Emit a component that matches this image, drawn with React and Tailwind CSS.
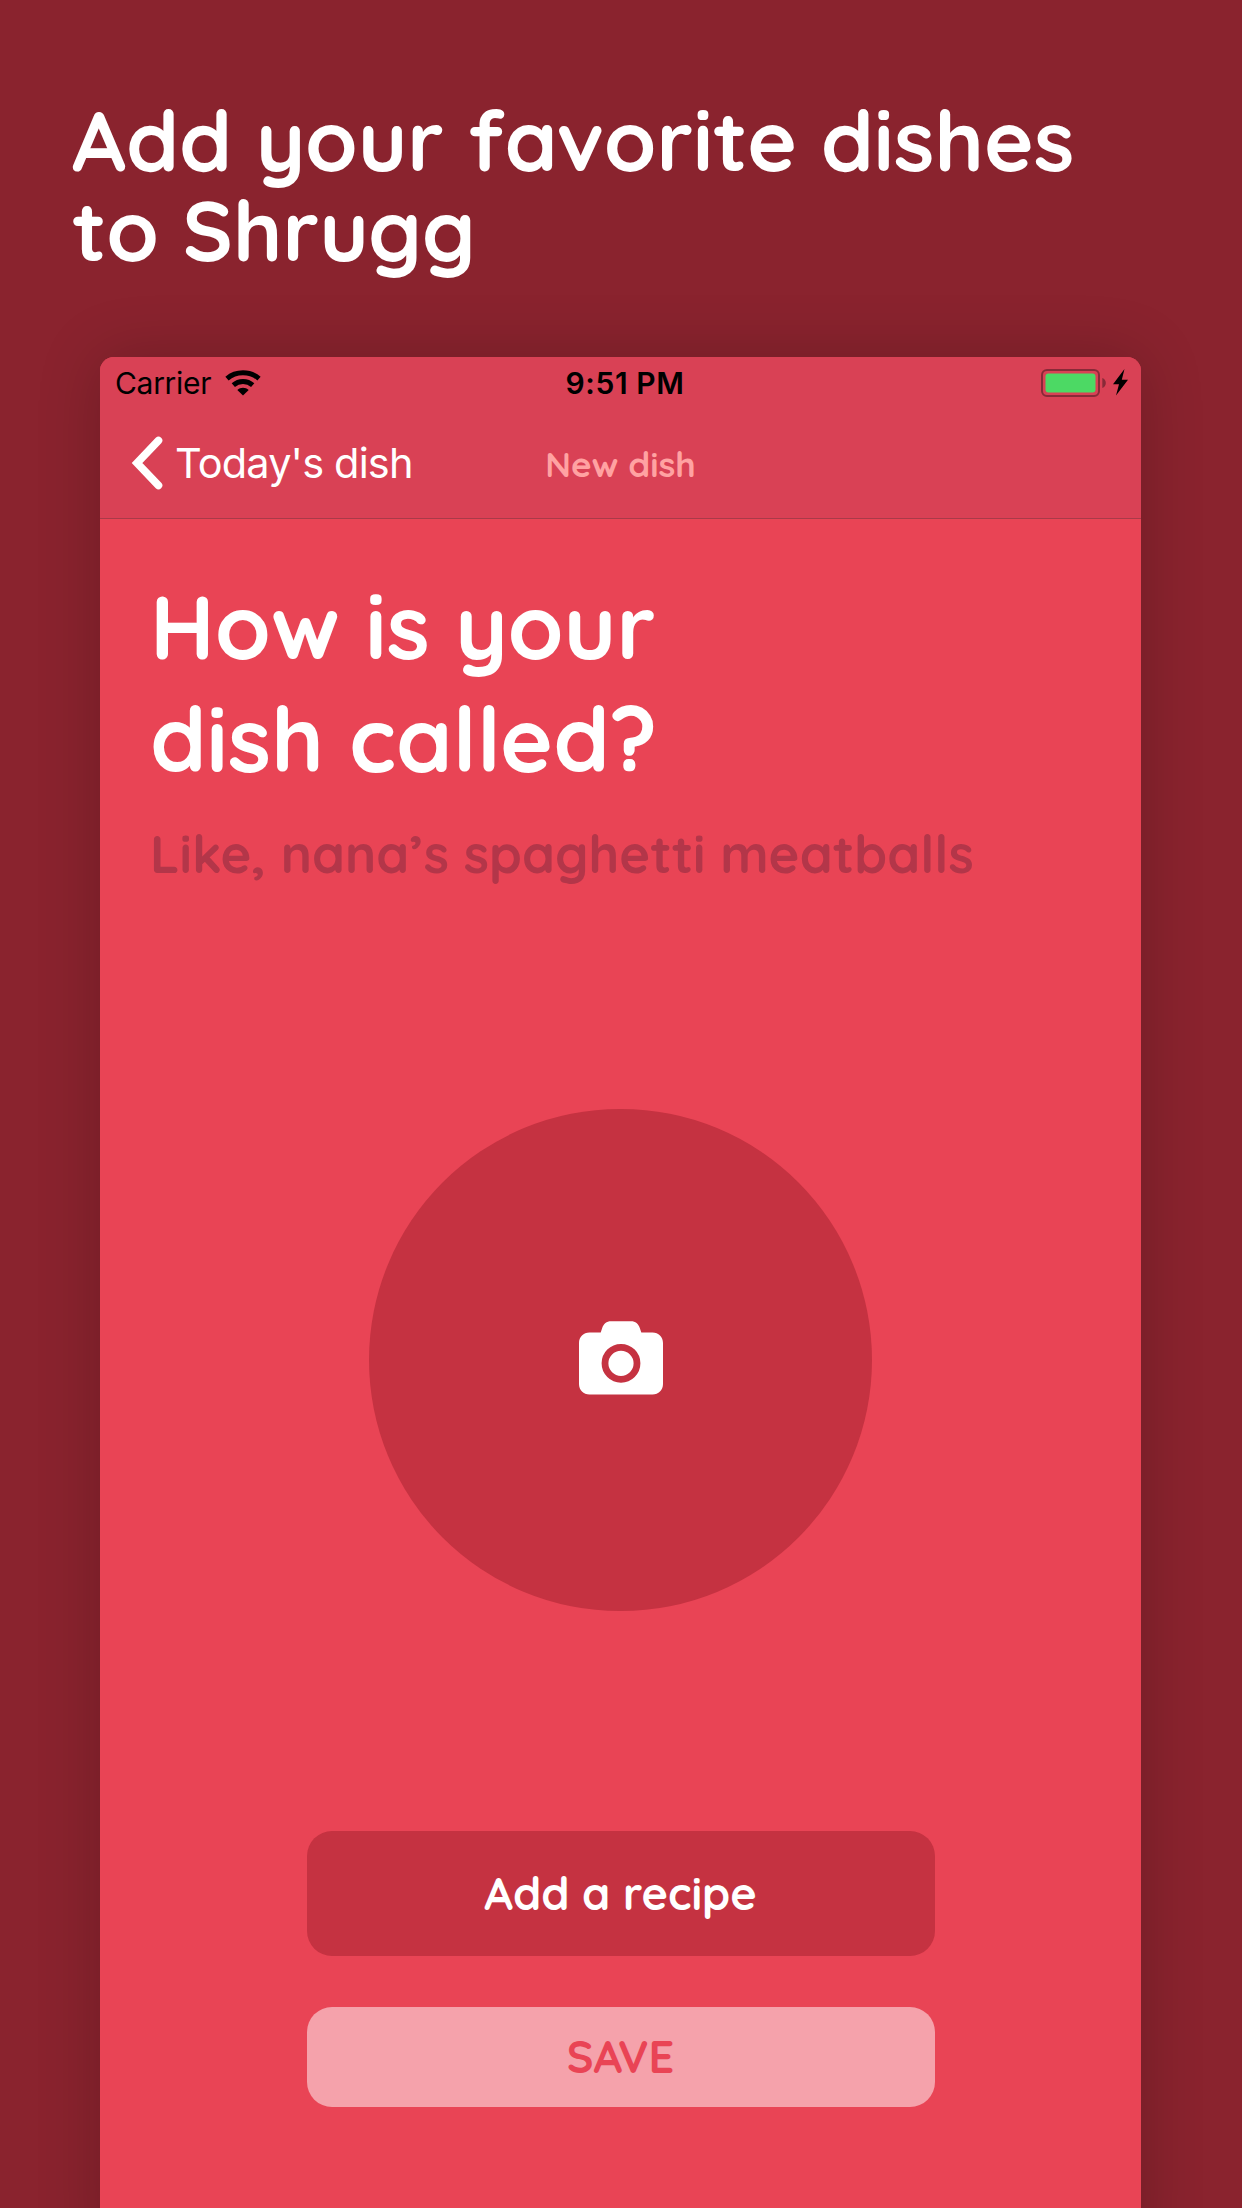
function WifiIcon() {
	return (
		<svg className="w-9 h-[26px]" viewBox="0 0 36 26" fill="none" stroke="#000">
			<path d="M2 8.6C11 0.9 25 0.9 34 8.6" strokeWidth="5" />
			<path d="M8.3 15.2C13.8 10.3 22.2 10.3 27.7 15.2" strokeWidth="4.9" />
			<path d="M12.3 20C15.6 17 20.4 17 23.7 20L18 25.6Z" fill="#000" stroke="none" />
		</svg>
	)
}

function BatteryIcon() {
	return (
		<svg className="w-[66px] h-7" viewBox="0 0 66 28">
			<rect x="1" y="1" width="57" height="26" rx="5" fill="none" stroke="#882a38" strokeWidth="2" />
			<rect x="4.5" y="4.5" width="50" height="19" rx="3" fill="#4cd964" />
			<path d="M61.3 9C66 10.5 66 17.5 61.3 19Z" fill="#882a38" />
		</svg>
	)
}

function BoltIcon() {
	return (
		<svg className="w-[15px] h-[27px]" viewBox="0 0 15 27">
			<path d="M11.5 0L0 15.3H6L3 26.5L15 10.8H8.8Z" fill="#000" />
		</svg>
	)
}

function ChevronIcon() {
	return (
		<svg className="w-8 h-[54px]" viewBox="0 0 32 54" fill="none" stroke="#fff" strokeWidth="7.6" strokeLinecap="round">
			<path d="M27.5 4.5L6 27L27.5 49.5" strokeLinejoin="miter" />
		</svg>
	)
}

function CameraIcon() {
	return (
		<svg className="w-[84px] h-[74px]" viewBox="0 0 84 74">
			<path
				d="M10.5 11.5H21.7L23.2 7C24.6 2.8 27.5 0.2 32 0.2H52C56.5 0.2 59.4 2.8 60.8 7L62.3 11.5H73.5C79.5 11.5 84 16 84 22V63C84 69 79.5 73.5 73.5 73.5H10.5C4.5 73.5 0 69 0 63V22C0 16 4.5 11.5 10.5 11.5Z"
				fill="#fff"
			/>
			<circle cx="42" cy="42.3" r="16" fill="none" stroke="#c53241" strokeWidth="6.8" />
		</svg>
	)
}

export default function App() {
	return (
		<div className="h-[2208px] w-[1242px] overflow-hidden bg-[#8a232e] font-['Quicksand','Nunito','Lato',sans-serif] font-bold text-white">
			<div className="flex h-[357px] flex-col pt-[94px] pl-[72px]">
				<h1 className="text-[84.5px] leading-[90px]">
					Add your favorite dishes
					<br />
					to Shrugg
				</h1>
			</div>

			<div className="mr-[101px] ml-[100px] flex h-[1900px] flex-col overflow-hidden rounded-t-[14px] bg-[#e94455] shadow-[0_0_64px_rgba(0,0,0,0.2)]">
				<header className="h-[162px] border-b border-[#a93a49] bg-[#d94155]">
					{/* Status bar */}
					<div className="grid h-[52px] grid-cols-3 items-center font-['Inter',sans-serif] text-[30px] text-black">
						<div className="flex items-center gap-[14px] pl-[15px]">
							<span className="font-normal tracking-[-0.3px]">Carrier</span>
							<WifiIcon />
						</div>
						<span className="pl-[9px] text-center font-[560] tracking-[0.6px]">9:51 PM</span>
						<div className="flex items-center justify-end gap-[6px] pr-[13px] pb-px">
							<BatteryIcon />
							<BoltIcon />
						</div>
					</div>

					{/* Navigation bar */}
					<div className="grid h-[109px] grid-cols-3 items-center">
						<div className="flex items-center gap-3 pb-[2px] pl-[31px]">
							<ChevronIcon />
							<span className="pt-[2px] font-['Inter',sans-serif] text-[41.5px] font-normal whitespace-nowrap tracking-[-0.85px]">Today's dish</span>
						</div>
						<span className="pt-[2px] text-center text-[35px] text-[#ffa2a2]">New dish</span>
					</div>
				</header>

				<main className="flex flex-col items-center pt-[50px]">
					<div className="w-full pl-[50px]">
						<h2 className="text-[90px] leading-[113px]">
							How is your
							<br />
							dish called?
						</h2>
						<p className="mt-[25px] text-[52.5px] leading-[66px] text-[#b33649]">Like, nana’s spaghetti meatballs</p>
					</div>

					<div className="mt-[223px] flex h-[502px] w-[503px] items-center justify-center rounded-full bg-[#c53241] pb-[4px]">
						<CameraIcon />
					</div>

					<button className="mt-[220px] h-[125px] w-[628px] rounded-[25px] bg-[#c53241] text-[45px]">Add a recipe</button>
					<button className="mt-[51px] h-[100px] w-[628px] rounded-[25px] bg-[#f5a2ab] text-[45px] text-[#e94455]">SAVE</button>
				</main>
			</div>
		</div>
	)
}
